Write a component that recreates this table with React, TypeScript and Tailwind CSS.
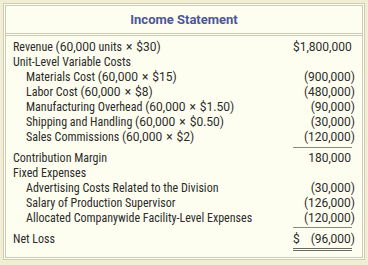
import React from "react";

const N = ({ children }: { children: React.ReactNode }) => (
  <span className="font-['Roboto',sans-serif] text-[12px]">{children}</span>
);

const X = () => <span className="font-['Roboto',sans-serif] text-[12px] mx-[4px]">×</span>;

const Line = () => (
  <div className="flex justify-end pr-[7px]">
    <div className="w-[62px]">
      <div className="w-[59px] h-px bg-[#8a8a80]" />
    </div>
  </div>
);

const R = ({
  children,
  value,
  indent,
  paren,
}: {
  children: React.ReactNode;
  value?: string;
  indent?: boolean;
  paren?: boolean;
}) => (
  <div className="flex items-center h-[15px] leading-[15px] px-[7px]">
    <div className={`flex-1 whitespace-nowrap ${indent ? "pl-[13px]" : ""}`}>{children}</div>
    <div
      className={`w-[62px] text-right whitespace-nowrap font-['Roboto',sans-serif] text-[12px] ${paren ? "" : "pr-[4px]"}`}
    >
      {value}
    </div>
  </div>
);

export default function App() {
  return (
    <div className="w-[368px] h-[265px] bg-[#f1eed4] p-[3px] font-['Roboto_Condensed','Roboto',sans-serif]">
      <div className="h-[257px] border-[3px] border-double border-[#cdccb8] bg-[#fefef0] text-[12px] text-[#2b2b2b]">
        <div className="h-[27px] flex items-center justify-center font-bold text-[13px] text-[#4b5797] font-['Roboto',sans-serif]">
          Income Statement
        </div>
        <div className="h-[3px] border-y border-[#cdccb8]" />
        <div className="pt-[4px]">
          <R value="$1,800,000">
            Revenue <N>(60,000</N> units<X /><N>$30)</N>
          </R>
          <R>Unit-Level Variable Costs</R>
          <R value="(900,000)" indent paren>
            Materials Cost <N>(60,000</N>
            <X />
            <N>$15)</N>
          </R>
          <R value="(480,000)" indent paren>
            Labor Cost <N>(60,000</N>
            <X />
            <N>$8)</N>
          </R>
          <R value="(90,000)" indent paren>
            Manufacturing Overhead <N>(60,000</N>
            <X />
            <N>$1.50)</N>
          </R>
          <R value="(30,000)" indent paren>
            Shipping and Handling <N>(60,000</N>
            <X />
            <N>$0.50)</N>
          </R>
          <R value="(120,000)" indent paren>
            Sales Commissions <N>(60,000</N>
            <X />
            <N>$2)</N>
          </R>
          <div className="h-[2px]" />
          <Line />
          <div className="h-[3px]" />
          <R value="180,000">Contribution Margin</R>
          <R>Fixed Expenses</R>
          <R value="(30,000)" indent paren>
            Advertising Costs Related to the Division
          </R>
          <R value="(126,000)" indent paren>
            Salary of Production Supervisor
          </R>
          <R value="(120,000)" indent paren>
            Allocated Companywide Facility-Level Expenses
          </R>
          <div className="h-[1px]" />
          <Line />
          <div className="h-[4px]" />
          <div className="flex items-center h-[15px] leading-[15px] px-[7px]">
            <div className="flex-1">Net Loss</div>
            <div className="w-[62px] flex justify-between whitespace-nowrap font-['Roboto',sans-serif] text-[12px]">
              <span>$</span>
              <span>(96,000)</span>
            </div>
          </div>
          <div className="flex justify-end pr-[7px] pt-[1px]">
            <div className="w-[62px]">
              <div className="w-[59px] h-[3px] border-y border-[#6a6a62]" />
            </div>
          </div>
        </div>
      </div>
    </div>
  );
}
